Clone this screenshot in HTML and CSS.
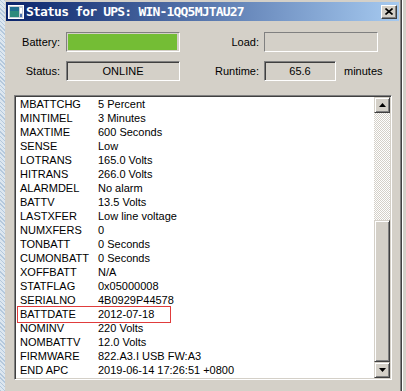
FILE: index.html
```html
<!DOCTYPE html>
<html lang="en">

<head>
    <meta charset="UTF-8">
    <meta name="viewport" content="width=device-width, initial-scale=1.0">
    <title>Status for UPS</title>
    <link rel="stylesheet" href="styles.css">
</head>

<body>
    <div class="desktop"></div>

    <div class="window">
        <div class="titlebar">
            <svg class="app-icon" width="16" height="16" viewBox="0 0 16 16">
                <rect x="0.5" y="1.5" width="15" height="13" fill="#c8d0d8" stroke="#ffffff"/>
                <rect x="2" y="3" width="9" height="10" fill="#2e8a7c"/>
                <rect x="2" y="3" width="9" height="4" fill="#1f6f8f"/>
                <rect x="12" y="4" width="2" height="5" fill="#ffffff"/>
                <rect x="12" y="10" width="2" height="3" fill="#4a6fb0"/>
            </svg>
            <span class="title">Status for UPS: WIN-1QQ5MJTAU27</span>
            <span class="close">
                <svg width="8" height="7" viewBox="0 0 8 7">
                    <path d="M0.5 0.5L7.5 6.5M7.5 0.5L0.5 6.5" stroke="#000" stroke-width="1.6"/>
                </svg>
            </span>
        </div>

        <div class="summary">
            <div class="row">
                <span class="label label-left">Battery:</span>
                <div class="meter">
                    <div class="meter-fill" style="width:100%"></div>
                </div>
                <span class="label label-right">Load:</span>
                <div class="meter"></div>
            </div>
            <div class="row">
                <span class="label label-left">Status:</span>
                <div class="field field-wide">ONLINE</div>
                <span class="label label-right">Runtime:</span>
                <div class="field field-narrow">65.6</div>
                <span class="unit">minutes</span>
            </div>
        </div>

        <div class="listbox">
            <div class="rows">
                <div class="item"><span class="key">MBATTCHG</span><span>5 Percent</span></div>
                <div class="item"><span class="key">MINTIMEL</span><span>3 Minutes</span></div>
                <div class="item"><span class="key">MAXTIME</span><span>600 Seconds</span></div>
                <div class="item"><span class="key">SENSE</span><span>Low</span></div>
                <div class="item"><span class="key">LOTRANS</span><span>165.0 Volts</span></div>
                <div class="item"><span class="key">HITRANS</span><span>266.0 Volts</span></div>
                <div class="item"><span class="key">ALARMDEL</span><span>No alarm</span></div>
                <div class="item"><span class="key">BATTV</span><span>13.5 Volts</span></div>
                <div class="item"><span class="key">LASTXFER</span><span>Low line voltage</span></div>
                <div class="item"><span class="key">NUMXFERS</span><span>0</span></div>
                <div class="item"><span class="key">TONBATT</span><span>0 Seconds</span></div>
                <div class="item"><span class="key">CUMONBATT</span><span>0 Seconds</span></div>
                <div class="item"><span class="key">XOFFBATT</span><span>N/A</span></div>
                <div class="item"><span class="key">STATFLAG</span><span>0x05000008</span></div>
                <div class="item"><span class="key">SERIALNO</span><span>4B0929P44578</span></div>
                <div class="item"><span class="key">BATTDATE</span><span>2012-07-18</span></div>
                <div class="item"><span class="key">NOMINV</span><span>220 Volts</span></div>
                <div class="item"><span class="key">NOMBATTV</span><span>12.0 Volts</span></div>
                <div class="item"><span class="key">FIRMWARE</span><span>822.A3.I USB FW:A3</span></div>
                <div class="item"><span class="key">END APC</span><span>2019-06-14 17:26:51 +0800</span></div>
            </div>

            <div class="scrollbar">
                <div class="sb-btn">
                    <svg width="7" height="4" viewBox="0 0 7 4"><polygon points="3.5,0 7,4 0,4" fill="#000"/></svg>
                </div>
                <div class="sb-track"></div>
                <div class="sb-thumb"></div>
                <div class="sb-btn">
                    <svg width="7" height="4" viewBox="0 0 7 4"><polygon points="0,0 7,0 3.5,4" fill="#000"/></svg>
                </div>
            </div>

            <div class="highlight"></div>
        </div>
    </div>

    <div class="behind"></div>
</body>

</html>
```

FILE: styles.css
```css
body {
    margin: 0;
    padding: 0;
    width: 406px;
    height: 391px;
    overflow: hidden;
    display: flex;
    background-color: #d4d0c8;
    font-family: "Liberation Sans", Arial, sans-serif;
    font-size: 11px;
    color: #000;
}

.desktop {
    width: 5px;
    flex-shrink: 0;
    background-color: #dce6ef;
    background-image: repeating-linear-gradient(45deg, #b4c8dc 0 1px, transparent 1px 3px);
}

.window {
    width: 397px;
    flex-shrink: 0;
    box-sizing: border-box;
    padding: 2px 1px 0 0;
    border-left: 1px solid #d4d0c8;
    border-right: 1px solid #404040;
    box-shadow: inset -1px 0 #808080;
    background-color: #d4d0c8;
}

.behind {
    flex: 1;
    background-color: #d4d0c8;
    border-left: 1px solid #ffffff;
}

/* title bar */
.titlebar {
    height: 19px;
    margin-right: 1px;
    padding: 0 2px;
    display: flex;
    align-items: center;
    background: linear-gradient(to right, #0a246a, #a6caf0);
}

.app-icon {
    flex-shrink: 0;
}

.title {
    flex: 1;
    margin-left: 2px;
    color: #ffffff;
    font-family: "DejaVu Sans Mono", monospace;
    font-weight: bold;
    font-size: 13px;
    letter-spacing: -0.8px;
    white-space: nowrap;
}

.close {
    width: 16px;
    height: 14px;
    box-sizing: border-box;
    display: flex;
    align-items: center;
    justify-content: center;
    background-color: #d4d0c8;
    border: 1px solid;
    border-color: #ffffff #404040 #404040 #ffffff;
    box-shadow: inset -1px -1px #808080;
}

/* battery / load / status / runtime */
.summary {
    padding-top: 11px;
}

.row {
    display: flex;
    align-items: center;
    height: 20px;
}

.row + .row {
    margin-top: 9px;
}

.label {
    text-align: right;
}

.label-left {
    width: 54px;
    margin-right: 6px;
}

.label-right {
    width: 79px;
    margin-right: 5px;
}

.meter {
    width: 114px;
    height: 20px;
    box-sizing: border-box;
    padding: 1px 2px 1px 1px;
    border: 1px solid;
    border-color: #808080 #ffffff #ffffff #808080;
}

.meter-fill {
    height: 100%;
    background-color: #74bd35;
}

.field {
    height: 20px;
    box-sizing: border-box;
    border: 1px solid;
    border-color: #808080 #ffffff #ffffff #808080;
    box-shadow: inset 1px 1px #404040, inset -1px -1px #d4d0c8;
    display: flex;
    align-items: center;
    justify-content: center;
}

.field-wide {
    width: 114px;
}

.field-narrow {
    width: 72px;
}

.unit {
    margin-left: 8px;
}

/* list of values */
.listbox {
    position: relative;
    margin: 14px 0 0 8px;
    width: 378px;
    height: 285px;
    box-sizing: border-box;
    padding: 1px;
    border: 1px solid;
    border-color: #808080 #ffffff #ffffff #808080;
    box-shadow: inset 1px 1px #404040, inset -1px -1px #d4d0c8;
    background-color: #ffffff;
    display: flex;
}

.rows {
    flex: 1;
    padding-left: 4px;
    overflow: hidden;
}

.item {
    display: flex;
    height: 14px;
    line-height: 14px;
    white-space: nowrap;
}

.key {
    width: 78px;
    flex-shrink: 0;
}

.scrollbar {
    width: 16px;
    display: flex;
    flex-direction: column;
}

.sb-btn,
.sb-thumb {
    box-sizing: border-box;
    background-color: #d4d0c8;
    border: 1px solid;
    border-color: #d4d0c8 #404040 #404040 #d4d0c8;
    box-shadow: inset 1px 1px #ffffff, inset -1px -1px #808080;
}

.sb-btn {
    height: 16px;
    display: flex;
    align-items: center;
    justify-content: center;
}

.sb-track {
    height: 107px;
    background-color: #ffffff;
    background-image: repeating-conic-gradient(#d4d0c8 0 25%, #ffffff 0 50%);
    background-size: 2px 2px;
}

.sb-thumb {
    flex: 1;
}

.highlight {
    position: absolute;
    left: 2px;
    top: 210px;
    width: 154px;
    height: 17px;
    box-sizing: border-box;
    border: 1px solid #e03c3c;
}
```
